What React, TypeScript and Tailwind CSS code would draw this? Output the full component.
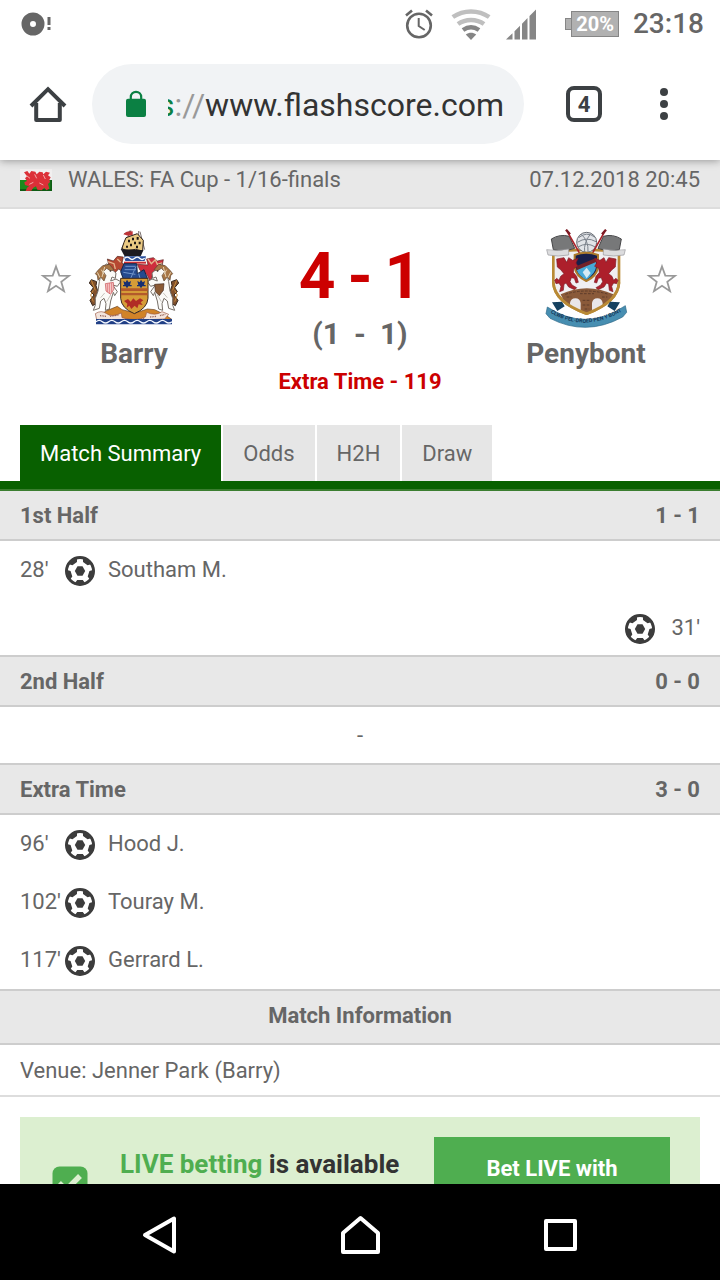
import React, { useState } from "react";

interface MatchEvent {
  minute: string;
  player?: string;
  side: "home" | "away";
}

interface Period {
  name: string;
  score: string;
  events: MatchEvent[];
}

const TABS = ["Match Summary", "Odds", "H2H", "Draw"];

const PERIODS: Period[] = [
  {
    name: "1st Half",
    score: "1 - 1",
    events: [
      { minute: "28'", player: "Southam M.", side: "home" },
      { minute: "31'", side: "away" }
    ]
  },
  { name: "2nd Half", score: "0 - 0", events: [] },
  {
    name: "Extra Time",
    score: "3 - 0",
    events: [
      { minute: "96'", player: "Hood J.", side: "home" },
      { minute: "102'", player: "Touray M.", side: "home" },
      { minute: "117'", player: "Gerrard L.", side: "home" }
    ]
  }
];

function StatusBar() {
  return (
    <div className="relative z-20 flex h-12 shrink-0 items-center justify-between bg-white pl-5 pr-4 text-[#666]">
      <svg className="h-7 w-8" viewBox="0 0 32 28" fill="#666">
        <path fillRule="evenodd" d="M13 2.500a11.500 11.500 0 1 0 0 23a11.500 11.500 0 0 0 0-23zM13 11a3 3 0 1 1 0 6a3 3 0 0 1 0-6z" />
        <path d="M27.500 7h3v8h-3zM27.500 17h3v3h-3z" />
      </svg>
      <div className="flex items-center">
        <svg className="mr-4 h-8 w-8" viewBox="0 0 32 32" fill="none" stroke="#666" strokeWidth="2.600">
          <circle cx="16" cy="17.500" r="11.800" />
          <path d="M15.700 10v8l6 4" strokeWidth="2" />
          <path d="M3 7.500l6-5M29 7.500l-6-5" />
        </svg>
        <svg className="mr-3.5 h-8 w-10" viewBox="0 0 40 32" fill="none">
          <path d="M1.800 9C12.500 1.500 27.500 1.500 38.200 9" stroke="#bfbfbf" strokeWidth="4.500" />
          <path d="M7 16C14.500 10.500 25.500 10.500 33 16" stroke="#bfbfbf" strokeWidth="4.500" />
          <path d="M12 22C17 18.500 23 18.500 28 22" stroke="#858585" strokeWidth="4.500" />
          <path d="M14.800 26.500C18 24.200 22 24.200 25.200 26.500L20 32z" fill="#858585" />
        </svg>
        <svg className="mr-7 h-8 w-8" viewBox="0 0 32 32" fill="#868686">
          <path d="M1 31.500L7.500 25.200V31.500zM9.500 23.200L15 17.700V31.500H9.500zM17 15.700L22.500 10V31.500H17zM24.500 8L31 1.500V31.500H24.500z" />
        </svg>
        <div className="flex items-center">
          <span className="h-3 w-1.5 border border-r-0 border-[#868686] bg-[#b1b1b1]" />
          <span className="flex h-[26px] items-center border border-[#868686] bg-[#b1b1b1] px-1 text-xl font-bold text-white">20%</span>
        </div>
        <span className="ml-3.5 text-[28px] font-medium">23:18</span>
      </div>
    </div>
  );
}

function Toolbar() {
  return (
    <header className="relative z-10 flex h-28 shrink-0 items-center bg-white pl-1 shadow-[0_1px_8px_rgba(0,0,0,0.35)]">
      <button type="button" aria-label="Home" className="flex w-[88px] items-center justify-center">
        <svg className="h-10 w-10" viewBox="0 0 40 40" fill="none" stroke="#3c4043" strokeWidth="4" strokeLinejoin="round">
          <path d="M3 22L20 5.200L37 22" strokeLinejoin="miter" />
          <path d="M8.200 19V36h23.600V19" />
        </svg>
      </button>
      <button
        type="button"
        aria-label="Address bar"
        className="flex h-20 flex-1 items-center overflow-hidden rounded-full bg-[#f1f3f5] pl-8 pr-5"
      >
        <svg className="mr-5 h-7 w-6 shrink-0" viewBox="0 0 24 28">
          <path d="M6.800 10V7a5.200 5.200 0 0 1 10.400 0v3" fill="none" stroke="#0b8043" strokeWidth="2.200" />
          <rect x="2" y="8.800" width="20" height="18.200" rx="2" fill="#0b8043" />
        </svg>
        <span className="flex flex-1 justify-end overflow-hidden pt-0.5 text-[32px] whitespace-nowrap">
          <span className="text-[#0b8043]">https</span>
          <span className="text-[#999]">://</span>
          <span className="text-[#333]">www.flashscore.com</span>
        </span>
      </button>
      <button type="button" aria-label="Tabs" className="ml-[42px] flex h-9 w-9 items-center justify-center rounded-lg border-4 border-[#3c4043] text-[22px] font-bold text-[#3c4043]">
        4
      </button>
      <button type="button" aria-label="Menu" className="mr-[30px] ml-9 flex w-[52px] justify-center">
        <svg className="h-8 w-3" viewBox="0 0 12 32" fill="#3c4043">
          <circle cx="6" cy="4" r="4" />
          <circle cx="6" cy="16" r="4" />
          <circle cx="6" cy="28" r="4" />
        </svg>
      </button>
    </header>
  );
}

function WalesFlag() {
  return (
    <svg className="h-[22px] w-8" viewBox="0 0 96 66">
      <rect width="96" height="66" fill="#f1efef" />
      <rect y="33" width="96" height="33" fill="#1c8a1d" />
      <rect y="60" width="96" height="6" fill="#0e5c14" />
      <rect x="91" y="33" width="5" height="33" fill="#0e5c14" />
      <path d="M12 10l10-4 6 8 6-8 12 2 4 8 8-8 10 2 2 6 8-8 12 3-6 8 8 6-4 8 2 6-6 6 4 14-9 5-6-8-8 8-13-2-4-10-8 4-6 9-17 1 4-10 6-4-12-4-2-8 8-4-6-8 6-6z" fill="#dc3038" />
      <path d="M20 20l10 8M44 16l6 12M58 42l12 6M70 18l6 12M28 46l12-6" stroke="#f4a7a8" strokeWidth="3" />
    </svg>
  );
}

function Horse() {
  return (
    <g strokeLinejoin="round">
      <path d="M64 182l-6 10 12 14-8 12 10 10-12 16 8 16 12-8-2-20 6-14-6-18 2-12z" fill="#80502c" stroke="#35261c" strokeWidth="3" />
      <path d="M70 214l-8 14 8 20M64 184l12 30" stroke="#c68a3c" strokeWidth="3" fill="none" />
      <path d="M98 146l12-12 14 16 14 12-2 16-10-4-4 12 16-6 14 8-10 14-14-4 14 20-8 12-4-10-8 26-4 24-12 4 2-20-6-16-10 8-4 22-18 6 6-16 0-20 8-22 4-28z" fill="#fbfaf7" stroke="#777069" strokeWidth="3" />
      <path d="M84 154l14-14 20-4 14 16-10 4-12-8-10 10 8 12-6 16-10-12-8 10-2-14-6-6z" fill="#a87645" stroke="#59402c" strokeWidth="2" />
      <path d="M94 152l8 14M104 144l-8 30M82 160l8 16" stroke="#e5d1b3" strokeWidth="3" />
      <path d="M122 228l-12 20M104 222l-12 14M110 196l2 10" stroke="#aca79f" strokeWidth="2" />
      <circle cx="121" cy="156" r="2" fill="#222" />
    </g>
  );
}

function BarryCrest() {
  return (
    <svg className="h-[100px] w-[100px]" viewBox="42 30 300 300" fill="none">
      {/* ship */}
      <path d="M180 34v14M206 36v66M184 36l-22 8M154 90l28-52M224 92l-14-54" stroke="#3a2a26" strokeWidth="2" />
      <path d="M160 46l10-8 18-1v12l-14 1z" fill="#bf3438" />
      <path d="M168 56l34-12 18 20-2 32-22-5-28 5-12-8 6-18z" fill="#e9c983" stroke="#2a1d16" strokeWidth="3" />
      <path d="M174 62h6v8h-6zM186 56h6v8h-6zM200 54h6v8h-6zM180 74h6v8h-6zM192 68h6v8h-6zM206 68h6v8h-6zM198 80h6v8h-6zM168 80h6v6h-6z" fill="#1e1714" />
      <path d="M152 90l68 4-8 18h-48z" fill="#1d1b22" />
      <path d="M162 112h66l-4 14h-58z" fill="#2b4f9b" />
      <path d="M164 118q8-7 15 0t15 0t15 0t15 0" stroke="#fff" strokeWidth="4" />
      <path d="M162 128h66v6h-66z" fill="#c92f36" />

      {/* mantling and helm */}
      <path d="M112 120l18 6 12-14 18 2-4 18 14 8-8 22-16-12-12 12-12-14-14 2 8-14z" fill="#b64831" stroke="#4f221d" strokeWidth="2" />
      <path d="M280 122l-18 4-12-10-20 4 4 18-32-2 8 18 20 12 12 22 6-22 14-12 22 8-8-20z" fill="#cf2e3d" stroke="#5c2220" strokeWidth="2" />
      <path d="M234 120l10 14 12-12 6 14 14-4M114 128l18 6 4 16M142 120l10 10" stroke="#e4b58b" strokeWidth="4" />
      <path d="M162 134h38l2 30 20-12 10 26-20 4-52-2-8-22z" fill="#254a8e" stroke="#152647" strokeWidth="3" />
      <path d="M166 142h30M164 152h34M160 160l36 6M198 142l-16 36M206 164l4 14" stroke="#7195ca" strokeWidth="3" />

      <Horse />
      <g transform="translate(384 0) scale(-1 1)">
        <Horse />
      </g>
      <path d="M106 194l24-4 2 20-10 16-14-10z" fill="#f5c9c7" stroke="#c54c50" strokeWidth="2" />
      <path d="M112 194v26M118 192v32M125 192v28" stroke="#d65b60" strokeWidth="2" />
      <path d="M254 196l28-2-2 20-12 16-12-12z" fill="#8b5a34" stroke="#422c22" strokeWidth="2" />

      {/* compartment */}
      <path d="M84 294l24-18 34-14 14 10 40 10 36-12 22 2 32 16 18 12-14 10H96z" fill="#d18328" stroke="#634023" strokeWidth="2" />

      {/* shield */}
      <path d="M152 178h82v60q-2 30-41 46q-39-16-41-46z" fill="#d69c37" stroke="#3d2a20" strokeWidth="3" />
      <path d="M153 208h80v8h-80zM153 222h80v7h-80z" fill="#b35a2b" />
      <path d="M171 182l5 8 7-4-3 12h5v4h-10l-4 6-4-6h-8v-4h4l-3-12 7 4zM213 182l5 8 7-4-3 12h5v4h-10l-4 6-4-6h-8v-4h4l-3-12 7 4z" fill="#172f72" />
      <path d="M162 246l12-6 8 8 8-10 8 8 12-8 10 6-8 6 6 8-12-2-4 12-8-8-10 10-6-10-8 6 2-12z" fill="#b12c25" />

      {/* motto scroll */}
      <path d="M76 284q18-12 34 0t44-2l2 14q42 12 70-2l4-14q26 12 46-2l20 8-12 14-46 2-40 10-42-2-38-6-38-2z" fill="#f3e4dc" stroke="#9c5842" strokeWidth="2" />
      <path d="M90 290l18 2M120 292l26-4M164 300l26 3M204 302l20-4M240 294l20-2M270 290l16-4" stroke="#9b6659" strokeWidth="4" strokeDasharray="3 2" />
      <path d="M78 300h228v16H78z" fill="#203f86" />
      <path d="M78 308q9.500-8 19 0t19 0t19 0t19 0t19 0t19 0t19 0t19 0t19 0t19 0t19 0t19 0" stroke="#f4f8ff" strokeWidth="4" />
    </svg>
  );
}

function Dragon() {
  return (
    <path
      d="M80 120l22-4 8 14 6-14 12 8 16-6-6 14 6 10-12 6-2 12 10 12 5 18-7 2-5-14-9-2-4 12 6 10 14 8-6 6-18-8-8-12-6 4-2 18-11 4 4-16-6-10-9 2-4-10 6-6 7 6 5-12 10-8-10-12-10-8z"
      fill="#ad1f2b"
      stroke="#7d1b25"
      strokeWidth="2"
      strokeLinejoin="round"
    />
  );
}

function PenybontCrest() {
  return (
    <svg className="h-[100px] w-[100px]" viewBox="18 30 300 300" fill="none">
      <defs>
        <path id="motto-arc" d="M56 278Q168 348 290 268" />
      </defs>
      <path d="M70 100Q168 84 267 100v90q-2 58-97 94q-98-36-100-94z" fill="#f0eff2" stroke="#b98a35" strokeWidth="8" />

      {/* football */}
      <circle cx="170" cy="70" r="30" fill="#e2e4e8" stroke="#646970" strokeWidth="3" />
      <path d="M146 56q24-20 48-2M142 70q28-18 56-2M144 84q26-16 52 0M154 46q22 20 20 52M182 44q-22 28-18 56" stroke="#7b828b" strokeWidth="3" />

      {/* flags */}
      <path d="M64 60q26-16 54-8l16 36q-34 12-64 4z" fill="#777879" stroke="#464648" strokeWidth="3" />
      <path d="M274 60q-26-16-54-8l-16 36q34 12 64 4z" fill="#777879" stroke="#464648" strokeWidth="3" />
      <path d="M50 92q30 6 66-2v18q-32 6-62 0zM286 92q-30 6-66-2v18q32 6 62 0z" fill="#dcdcde" stroke="#97979b" strokeWidth="2" />
      <path d="M112 38l42 74M224 38l-42 74" stroke="#a9232b" strokeWidth="5" />
      <path d="M108 32l12 14M228 32l-12 14" stroke="#7c1a24" strokeWidth="7" />

      {/* inner shield */}
      <path d="M134 108q34-14 70 0v36q-4 28-35 42q-31-14-35-42z" fill="#181f4b" stroke="#ad7c2c" strokeWidth="6" />
      <path d="M140 152l58-28v20q-2 20-29 38q-23-12-29-30z" fill="#46a9d8" />
      <path d="M138 142l62-26v12l-60 26z" fill="#72222a" />
      <path d="M158 160l12-14 12 16-12 16z" fill="#d5eaf4" />

      <Dragon />
      <g transform="translate(338 0) scale(-1 1)">
        <Dragon />
      </g>

      {/* bridge */}
      <path d="M92 226q78-36 158 0l-10 18q-22 20-70 38q-48-16-70-40z" fill="#8a5a3a" />
      <path d="M106 226q62-20 130 0M110 234h14M216 234h16M150 224h42M158 244h22M158 258h22M164 270h14" stroke="#5f3d2b" strokeWidth="3" strokeDasharray="8 4" />
      <path d="M120 262v-10q2-14 16-14q14 0 16 14v26q-22-8-32-16zM186 278v-26q2-14 16-14q14 0 16 14v10q-10 8-32 16z" fill="#e9e6e9" />
      <path d="M70 190q2 58 100 94q95-36 97-94" stroke="#b98a35" strokeWidth="8" />

      {/* motto ribbon */}
      <path d="M66 250l30-2 8 14-22 14zM270 250l-30-2-8 14 22 14z" fill="#164260" />
      <path d="M52 264q116 76 234-4l4 20-12 14q-110 60-218 4l-12-14z" fill="#478eb1" stroke="#2c6686" strokeWidth="2" />
      <text fontFamily="Roboto, sans-serif" fontSize="16" fontWeight="700" fill="#15395a">
        <textPath href="#motto-arc" startOffset="6">CLWB PEL-DROED PEN Y BONT</textPath>
      </text>
    </svg>
  );
}

function StarButton({ team }: { team: string }) {
  return (
    <button type="button" aria-label={`Follow ${team}`} className="h-8 w-8">
      <svg className="h-8 w-8" viewBox="0 0 32 32" fill="none" stroke="#999" strokeWidth="1.800">
        <path d="M16 3.500l3.300 9.100 9.700.3-7.700 6 2.700 9.300-8-5.400-8 5.400 2.700-9.300-7.700-6 9.700-.3z" />
      </svg>
    </button>
  );
}

function BallIcon() {
  return (
    <svg className="h-8 w-8 shrink-0" viewBox="0 0 32 32" fill="#3c3c3c">
      <circle cx="16" cy="16" r="13.500" fill="#fff" stroke="#3c3c3c" strokeWidth="3" />
      <path d="M13.500 11.200h5l2.700 4.800-2.700 4.800h-5l-2.700-4.800z" />
      {[0, 72, 144, 216, 288].map((angle) => (
        <path key={angle} d="M13.200 25h5.600l1.700 2.200L22 29q-6 2.500-12 0l1.500-1.800z" transform={`rotate(${angle} 16 16)`} />
      ))}
    </svg>
  );
}

function EventRow({ event }: { event: MatchEvent }) {
  if (event.side === "away") {
    return (
      <li className="flex h-14 items-center justify-end px-5">
        <span className="pt-1">
          <BallIcon />
        </span>
        <span className="w-11 text-right">{event.minute}</span>
      </li>
    );
  }
  return (
    <li className="flex h-14 items-center px-5">
      <span className="w-11">{event.minute}</span>
      <span className="pt-1">
        <BallIcon />
      </span>
      <span className="ml-3">{event.player}</span>
    </li>
  );
}

function MatchHeader() {
  return (
    <section className="flex shrink-0 items-start justify-between pt-5 pr-[42px] pb-5 pl-10">
      <div className="flex gap-3">
        <div className="pt-[34px]">
          <StarButton team="Barry" />
        </div>
        <div className="flex w-[100px] flex-col items-center">
          <BarryCrest />
          <span className="text-[28px] leading-[50px] font-bold whitespace-nowrap">Barry</span>
        </div>
      </div>
      <div className="flex flex-col items-center font-bold">
        <div className="flex gap-3 pt-4 text-[64px] leading-[64px] text-[#c00]">
          <span>4</span>
          <span>-</span>
          <span>1</span>
        </div>
        <div className="flex gap-3.5 text-[30px] leading-[50px]">
          <span>(1</span>
          <span>-</span>
          <span>1)</span>
        </div>
        <span className="text-[22px] leading-[46px] text-[#c00]">Extra Time - 119</span>
      </div>
      <div className="flex gap-2.5">
        <div className="flex w-[100px] flex-col items-center">
          <PenybontCrest />
          <span className="text-[28px] leading-[50px] font-bold whitespace-nowrap">Penybont</span>
        </div>
        <div className="pt-[34px]">
          <StarButton team="Penybont" />
        </div>
      </div>
    </section>
  );
}

function BettingBanner() {
  return (
    <aside className="mx-5 mt-5 flex h-[134px] shrink-0 items-center bg-[#dcefd0] pr-[30px] pl-8">
      <svg className="h-9 w-9 shrink-0" viewBox="0 0 36 36">
        <rect x="0.500" y="0.500" width="35" height="35" rx="7" fill="#4fae50" />
        <path d="M7 17l7 7L28 10" fill="none" stroke="#dcefd0" strokeWidth="5.500" />
      </svg>
      <p className="ml-8 flex-1 self-start pt-[30px] text-[26px] leading-[34px] font-bold whitespace-nowrap text-[#333]">
        <span className="text-[#4fae50]">LIVE betting</span> is available
      </p>
      <button type="button" className="flex h-[94px] w-[236px] items-start justify-center bg-[#4fae50] pt-4 text-[22px] leading-8 font-bold text-white">
        Bet LIVE with
      </button>
    </aside>
  );
}

function SystemNav() {
  return (
    <nav className="grid h-24 shrink-0 grid-cols-3 items-center bg-black px-[60px] pt-1.5">
      <button type="button" aria-label="Back" className="flex justify-center">
        <svg className="h-10 w-10" viewBox="0 0 40 40" fill="none" stroke="#fff" strokeWidth="4" strokeLinejoin="round">
          <path d="M34 3.500v33L5 20z" />
        </svg>
      </button>
      <button type="button" aria-label="Home screen" className="flex justify-center">
        <svg className="h-10 w-10" viewBox="0 0 40 40" fill="none" stroke="#fff" strokeWidth="4" strokeLinejoin="round">
          <path d="M3 37V18L20.500 3 38 18v19z" />
        </svg>
      </button>
      <button type="button" aria-label="Recent apps" className="flex justify-center">
        <svg className="h-10 w-10" viewBox="0 0 40 40" fill="none" stroke="#fff" strokeWidth="4" strokeLinejoin="round">
          <path d="M6 6h29v28H6z" />
        </svg>
      </button>
    </nav>
  );
}

export default function App() {
  const [activeTab, setActiveTab] = useState("Match Summary");

  return (
    <div className="flex h-screen flex-col overflow-hidden bg-white font-[Roboto,sans-serif] text-[22px] text-[#666]">
      <StatusBar />
      <Toolbar />

      <main className="flex min-h-0 flex-1 flex-col overflow-hidden">
        <div className="flex shrink-0 items-center border-b-2 border-[#ddd] bg-[#e8e8e8] px-5 pb-[7px] leading-10">
          <WalesFlag />
          <span className="ml-4 flex-1">WALES: FA Cup - 1/16-finals</span>
          <time>07.12.2018 20:45</time>
        </div>

        <MatchHeader />

        <div className="flex shrink-0 gap-0.5 border-b-8 border-[#086000] px-5">
          {TABS.map((tab) => (
            <button
              key={tab}
              type="button"
              onClick={() => setActiveTab(tab)}
              className={`h-14 px-5 ${tab === activeTab ? "bg-[#086000] text-white" : "bg-[#e6e6e6]"}`}
            >
              {tab}
            </button>
          ))}
        </div>

        {PERIODS.map((period, idx) => (
          <section key={period.name} className="shrink-0">
            <h2
              className={`flex h-[52px] items-center justify-between border-y-2 border-b-[#cdcdcd] bg-[#e8e8e8] px-5 font-bold ${
                idx === 0 ? "border-t-[#3b7e30]" : "border-t-[#cdcdcd]"
              }`}
            >
              <span>{period.name}</span>
              <span>{period.score}</span>
            </h2>
            {period.events.length > 0 ? (
              <ul className="flex flex-col gap-0.5">
                {period.events.map((event) => (
                  <EventRow key={event.minute} event={event} />
                ))}
              </ul>
            ) : (
              <p className="flex h-14 items-center justify-center">-</p>
            )}
          </section>
        ))}

        <h2 className="mt-0.5 flex h-14 shrink-0 items-center justify-center border-y-2 border-[#cdcdcd] bg-[#e8e8e8] pb-1 font-bold">
          Match Information
        </h2>
        <p className="flex h-[52px] shrink-0 items-center border-b-2 border-[#ddd] px-5">Venue: Jenner Park (Barry)</p>

        <BettingBanner />
      </main>

      <SystemNav />
    </div>
  );
}
